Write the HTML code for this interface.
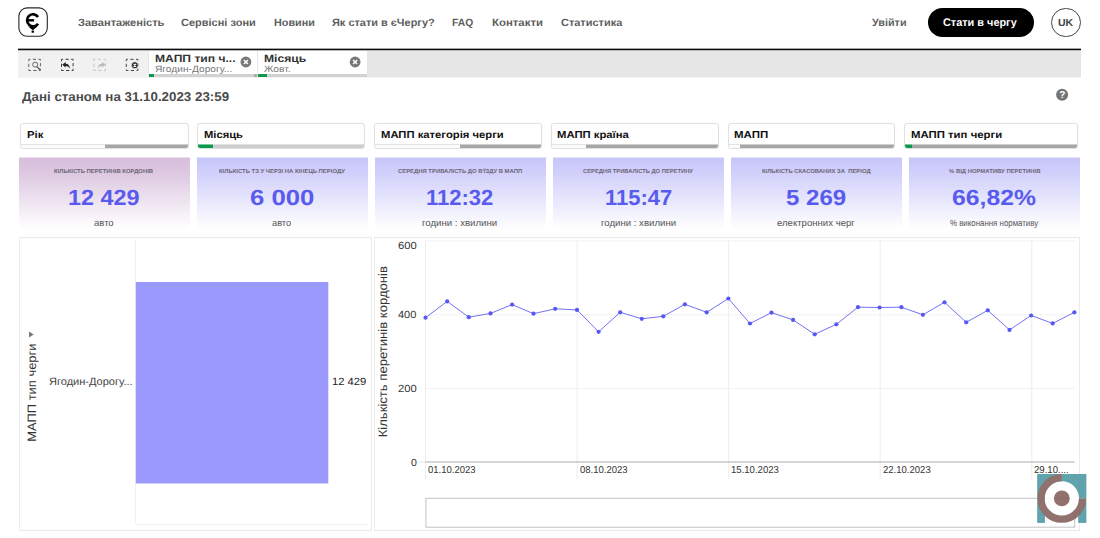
<!DOCTYPE html>
<html lang="uk">
<head>
<meta charset="utf-8">
<title>єЧерга — Статистика</title>
<style>
*{box-sizing:border-box;margin:0;padding:0}
html,body{width:1100px;height:538px;overflow:hidden;background:#fff}
body{font-family:"Liberation Sans",sans-serif;position:relative;color:#333;text-rendering:geometricPrecision}
.t{position:absolute;white-space:nowrap;line-height:1;transform-origin:0 0;display:block}
.btn{position:absolute;left:927.5px;top:7.5px;width:106px;height:29.5px;border-radius:15px;background:#000}
.lang{position:absolute;left:1051px;top:7.5px;width:29.7px;height:29.7px;border-radius:50%;border:1.1px solid #444}
.topline{position:absolute;z-index:2;left:18px;top:48px;width:1063px;height:3px;background:linear-gradient(#a6a6a6 0,#a6a6a6 1px,#0c0c0c 1px,#0c0c0c 2px,#b8b8b8 2px,#b8b8b8 3px)}
.toolbar{position:absolute;left:18px;top:50px;width:1063px;height:28px;background:linear-gradient(#e6e6e6 0,#e6e6e6 27px,#f3f3f3 27px)}
.tools{position:absolute;left:0;top:0;width:130px;height:27px;background:#f1f1f1}
.tab{position:absolute;top:0;height:27px;background:#fff}
.tab .bar{position:absolute;left:0;bottom:0;width:100%;height:3px;background:#d2d2d2}
.tab .bar i{position:absolute;top:0;height:3px}
.filter{position:absolute;top:123px;height:26px;background:#fff;border:1px solid #e1e1e1;border-radius:3px;overflow:hidden;box-shadow:0 0 1px rgba(0,0,0,.05)}
.filter .fb{position:absolute;left:0;right:0;bottom:0;height:4px;background:#fbfbfb;border-top:1px solid #e4e4e4}
.filter .fb i{position:absolute;top:-1px;height:4px}
.kpi{position:absolute;top:157px;width:171px;height:73px}
.kp{background:linear-gradient(#e4e3fc 0,#e4e3fc 1px,#c7c6fa 1px,#cfcefb 14px,#fff 72px)}
.kp1{background:linear-gradient(#ecdfee 0,#ecdfee 1px,#d8bedc 1px,#dcc6e0 14px,#fff 72px)}
.panel{position:absolute;top:237px;height:294px;border:1px solid #ebebeb;background:#fff}
svg{position:absolute;left:0;top:0;overflow:visible}
</style>
</head>
<body>
<!-- header -->
<svg width="30" height="30" viewBox="0 0 30 30" style="left:18px;top:7px">
  <rect x="0.9" y="0.9" width="28.4" height="28.4" rx="8.2" ry="8.2" fill="#fff" stroke="#262626" stroke-width="1.1"/>
  <path d="M20.05 9.95 A6 6 0 1 0 20.05 16.65" fill="none" stroke="#000" stroke-width="2.6"/>
  <path d="M9.3 13.3 H16.1" stroke="#000" stroke-width="2.4"/>
  <path d="M10.1 19.5 L19.5 19.5 L14.85 23.3 Z" fill="#000"/>
  <rect x="13.6" y="23.6" width="2.4" height="2.1" fill="#000"/>
</svg>
<div class="btn"></div>
<div class="lang"></div>
<div class="topline"></div>
<!-- toolbar -->
<div class="toolbar">
  <div class="tools"></div>
  <div class="tab" style="left:130.5px;width:108.5px"><div class="bar"><i style="left:0;width:5px;background:#0a9a4a"></i><i style="right:0;width:3px;background:#aaa"></i></div></div>
  <div class="tab" style="left:240px;width:109px"><div class="bar"><i style="left:0;width:9px;background:#0a9a4a"></i></div></div>
</div>
<svg width="1100" height="100" viewBox="0 0 1100 100">
  <!-- toolbar icons -->
  <g fill="none" stroke="#606060" stroke-width="1">
    <rect x="28.8" y="59.3" width="11.6" height="11.2" stroke-dasharray="3.2 2.45" stroke-dashoffset="1.6"/>
    <circle cx="35.2" cy="64.6" r="2.5" stroke-width="0.9" stroke="#555"/><path d="M37 66.6 L39.9 69.7" stroke-width="1.3" stroke="#555"/>
  </g>
  <g fill="none" stroke="#3a3a3a" stroke-width="1">
    <rect x="61.5" y="59.3" width="11.6" height="11.2" stroke-dasharray="3.2 2.45" stroke-dashoffset="1.6"/>
    <path d="M62.2 64.8 L65.7 62 L65.7 63.8 C68.1 63.8 69.7 65.5 69.9 68.7 C68.7 66.7 67.5 66 65.7 66 L65.7 67.6 Z" fill="#222" stroke="none"/>
  </g>
  <g fill="none" stroke="#c6c6c6" stroke-width="1">
    <rect x="93.8" y="59.3" width="11.6" height="11.2" stroke-dasharray="3.2 2.45" stroke-dashoffset="1.6"/>
    <path d="M105.4 64.8 L101.9 62 L101.9 63.8 C99.5 63.8 97.9 65.5 97.7 68.7 C98.9 66.7 100.1 66 101.9 66 L101.9 67.6 Z" fill="#bcbcbc" stroke="none"/>
  </g>
  <g fill="none" stroke="#484848" stroke-width="1">
    <rect x="126.3" y="59.3" width="11.6" height="11.2" stroke-dasharray="3.2 2.45" stroke-dashoffset="1.6"/>
    <circle cx="134.8" cy="65.2" r="3.5" fill="#2b2b2b" stroke="#f1f1f1" stroke-width="0.8"/><path d="M133.5 63.9 l2.6 2.6 M136.1 63.9 l-2.6 2.6" stroke="#fff" stroke-width="1.1"/>
  </g>
  <!-- tab close icons -->
  <g>
    <circle cx="245.9" cy="62" r="5.4" fill="#787878"/><path d="M243.9 60 l4 4 M247.9 60 l-4 4" stroke="#fff" stroke-width="1.5"/>
    <circle cx="355.1" cy="62" r="5.4" fill="#787878"/><path d="M353.1 60 l4 4 M357.1 60 l-4 4" stroke="#fff" stroke-width="1.5"/>
  </g>
  <!-- help -->
  <circle cx="1062.1" cy="94.8" r="6" fill="#747474"/>
</svg>
<span class="t" style="left:1059.2px;top:91px;font-size:10px;font-weight:bold;color:#fff">?</span>
<!-- filters -->
<div class="filter" style="left:20px;width:169px"><div class="fb"><i style="left:84px;right:0;background:linear-gradient(#cfcfcf 0,#cfcfcf 1px,#a6a6a6 1px)"></i></div></div>
<div class="filter" style="left:197px;width:167.5px"><div class="fb"><i style="left:0;width:14.5px;background:linear-gradient(#7cc79b 0,#7cc79b 1px,#0a9a4a 1px)"></i><i style="left:14.5px;right:0;background:linear-gradient(#e2e2e2 0,#e2e2e2 1px,#cdcdcd 1px)"></i></div></div>
<div class="filter" style="left:374px;width:168px"><div class="fb"><i style="left:84.5px;right:0;background:linear-gradient(#cfcfcf 0,#cfcfcf 1px,#a6a6a6 1px)"></i></div></div>
<div class="filter" style="left:551px;width:168px"><div class="fb"><i style="left:33.5px;right:0;background:linear-gradient(#cfcfcf 0,#cfcfcf 1px,#a6a6a6 1px)"></i></div></div>
<div class="filter" style="left:727.5px;width:167.5px"><div class="fb"><i style="left:11.5px;right:0;background:linear-gradient(#cfcfcf 0,#cfcfcf 1px,#a6a6a6 1px)"></i></div></div>
<div class="filter" style="left:904px;width:174px"><div class="fb"><i style="left:0;width:7px;background:linear-gradient(#7cc79b 0,#7cc79b 1px,#0a9a4a 1px)"></i><i style="left:7px;right:0;background:linear-gradient(#cfcfcf 0,#cfcfcf 1px,#a6a6a6 1px)"></i></div></div>
<!-- KPI -->
<div class="kpi kp1" style="left:19px"></div>
<div class="kpi kp" style="left:197.4px"></div>
<div class="kpi kp" style="left:375px"></div>
<div class="kpi kp" style="left:553.3px"></div>
<div class="kpi kp" style="left:731px"></div>
<div class="kpi kp" style="left:909px"></div>
<!-- panels -->
<div class="panel" style="left:19px;width:352.5px"></div>
<div class="panel" style="left:373.5px;width:706.5px"></div>
<svg width="1100" height="538" viewBox="0 0 1100 538">
  <!-- bar chart -->
  <path d="M135.5 240 V524" stroke="#f1f1f1" stroke-width="1"/>
  <path d="M136 524.5 H368" stroke="#f3f3f3" stroke-width="1.5"/>
  <rect x="135.8" y="282" width="192.5" height="201.5" fill="#9b99fc"/>
  <path d="M29 331.6 L33.7 334.5 L29 337.4 Z" fill="#7a7a7a"/>
  <!-- line chart grid -->
  <g stroke="#f2f2f2" stroke-width="1" fill="none">
    <path d="M425.5 240.8 H1075 M425.5 314.8 H1075 M425.5 388.5 H1075"/>
  </g>
  <g stroke="#ececec" stroke-width="1" fill="none">
    <path d="M425.5 240.8 V479.5 M577.2 240.8 V479.5 M728.7 240.8 V479.5 M880.2 240.8 V479.5 M1031.8 240.8 V479.5"/>
  </g>
  <path d="M419 462 H425.5" stroke="#e4e4e4" stroke-width="1"/>
  <path d="M425.5 462 H1074.8" stroke="#c9c9c9" stroke-width="1.4"/>
  <rect x="425.9" y="498.3" width="648.8" height="28.9" fill="#fff" stroke="#c2c2c2" stroke-width="1"/>
  <polyline fill="none" stroke="#7272f2" stroke-width="1" stroke-linejoin="round" points="425.5,317.7 447.2,301.4 468.8,317.2 490.5,313.4 512.1,304.6 533.5,313.7 555.2,308.8 577,309.9 598.6,331.8 620.2,312.3 641.8,318.8 663.3,316.3 684.9,304.3 706.7,312.3 728.4,298.5 750,323.5 771.5,312.6 793.1,319.9 814.7,334.3 836.4,324.3 858,307.2 879.6,307.5 901.4,307.2 922.9,314.8 944.5,302.3 966.2,322.3 987.8,310.3 1009.5,329.9 1031.1,315.5 1052.7,323.4 1074.4,312.3"/>
  <g fill="#5758f3"><circle cx="425.5" cy="317.7" r="2.1"/><circle cx="447.2" cy="301.4" r="2.1"/><circle cx="468.8" cy="317.2" r="2.1"/><circle cx="490.5" cy="313.4" r="2.1"/><circle cx="512.1" cy="304.6" r="2.1"/><circle cx="533.5" cy="313.7" r="2.1"/><circle cx="555.2" cy="308.8" r="2.1"/><circle cx="577" cy="309.9" r="2.1"/><circle cx="598.6" cy="331.8" r="2.1"/><circle cx="620.2" cy="312.3" r="2.1"/><circle cx="641.8" cy="318.8" r="2.1"/><circle cx="663.3" cy="316.3" r="2.1"/><circle cx="684.9" cy="304.3" r="2.1"/><circle cx="706.7" cy="312.3" r="2.1"/><circle cx="728.4" cy="298.5" r="2.1"/><circle cx="750" cy="323.5" r="2.1"/><circle cx="771.5" cy="312.6" r="2.1"/><circle cx="793.1" cy="319.9" r="2.1"/><circle cx="814.7" cy="334.3" r="2.1"/><circle cx="836.4" cy="324.3" r="2.1"/><circle cx="858" cy="307.2" r="2.1"/><circle cx="879.6" cy="307.5" r="2.1"/><circle cx="901.4" cy="307.2" r="2.1"/><circle cx="922.9" cy="314.8" r="2.1"/><circle cx="944.5" cy="302.3" r="2.1"/><circle cx="966.2" cy="322.3" r="2.1"/><circle cx="987.8" cy="310.3" r="2.1"/><circle cx="1009.5" cy="329.9" r="2.1"/><circle cx="1031.1" cy="315.5" r="2.1"/><circle cx="1052.7" cy="323.4" r="2.1"/><circle cx="1074.4" cy="312.3" r="2.1"/></g>
  <g font-family="Liberation Sans, sans-serif" style="text-rendering:geometricPrecision">
  <text transform="translate(36.40 440.80) rotate(-90) scale(1.0614 1)" x="-0.95" y="0" font-size="12.20" font-weight="normal" fill="#333">МАПП тип черги</text>
  <text transform="translate(387.30 436.30) rotate(-90) scale(1.0738 1)" x="-0.95" y="0" font-size="12.20" font-weight="normal" fill="#333">Кількість перетинів кордонів</text>
  </g>
  <!-- watermark logo -->
  <g transform="translate(1037.4 474)" opacity="0.9">
    <path d="M0 0 H48.8 V48.8 H41 V24.4 H7.3 V48.8 H0 Z" fill="#4f9aa4"/>
    <circle cx="24.4" cy="24.4" r="24.4" fill="#fff" />
    <path d="M24.4 0 H48.8 V24.4 H24.4 Z" fill="#4f9aa4"/>
    <path d="M0 0 H24.4 V24.4 H0 Z M0 24.4 H7.3 V48.8 H0 Z M41 24.4 H48.8 V48.8 H41 Z" fill="#4f9aa4"/>
    <circle cx="24.4" cy="24.4" r="17.2" fill="#fff"/>
    <path d="M45.15 24.4 A20.75 20.75 0 1 1 24.4 3.65" fill="none" stroke="#86625f" stroke-width="7.3"/>
    <circle cx="24.4" cy="24.4" r="7.9" fill="#86625f"/>
  </g>
</svg>
<span class="t" style="left:77.73px;top:19px;font-size:10.46px;font-weight:bold;color:#5e5e5e;transform:scaleX(1.0617)">Завантаженість</span>
<span class="t" style="left:181.41px;top:19px;font-size:10.46px;font-weight:bold;color:#5e5e5e;transform:scaleX(1.0526)">Сервісні зони</span>
<span class="t" style="left:273.57px;top:19px;font-size:10.46px;font-weight:bold;color:#5e5e5e;transform:scaleX(1.0346)">Новини</span>
<span class="t" style="left:332.33px;top:19px;font-size:10.46px;font-weight:bold;color:#5e5e5e;transform:scaleX(1.0471)">Як стати в єЧергу?</span>
<span class="t" style="left:452.36px;top:19px;font-size:10.46px;font-weight:bold;color:#5e5e5e;transform:scaleX(0.9853)">FAQ</span>
<span class="t" style="left:491.79px;top:19px;font-size:10.46px;font-weight:bold;color:#5e5e5e;transform:scaleX(1.0892)">Контакти</span>
<span class="t" style="left:560.66px;top:19px;font-size:10.46px;font-weight:bold;color:#5e5e5e;transform:scaleX(1.0482)">Статистика</span>
<span class="t" style="left:872.40px;top:19px;font-size:10.46px;font-weight:bold;color:#5e5e5e;transform:scaleX(1.0333)">Увійти</span>
<span class="t" style="left:943.16px;top:18px;font-size:11.04px;font-weight:bold;color:#fff;transform:scaleX(0.9882)">Стати в чергу</span>
<span class="t" style="left:1058.11px;top:19px;font-size:10.17px;font-weight:bold;color:#444;transform:scaleX(1.0372)">UK</span>
<span class="t" style="left:155.04px;top:54px;font-size:10.60px;font-weight:bold;color:#333;transform:scaleX(1.1428)">МАПП тип ч...</span>
<span class="t" style="left:154.72px;top:65px;font-size:9.15px;font-weight:normal;color:#777;transform:scaleX(1.1172)">Ягодин-Дорогу...</span>
<span class="t" style="left:263.84px;top:54px;font-size:10.60px;font-weight:bold;color:#333;transform:scaleX(1.1466)">Місяць</span>
<span class="t" style="left:264.30px;top:65px;font-size:9.15px;font-weight:normal;color:#777;transform:scaleX(1.1180)">Жовт.</span>
<span class="t" style="left:22.30px;top:91px;font-size:12.78px;font-weight:bold;color:#4a4a4a;transform:scaleX(1.0447)">Дані станом на 31.10.2023 23:59</span>
<span class="t" style="left:26.79px;top:131px;font-size:10.02px;font-weight:bold;color:#111;transform:scaleX(1.1278)">Рік</span>
<span class="t" style="left:203.80px;top:131px;font-size:10.02px;font-weight:bold;color:#111;transform:scaleX(1.1156)">Місяць</span>
<span class="t" style="left:381.40px;top:131px;font-size:10.02px;font-weight:bold;color:#111;transform:scaleX(1.1245)">МАПП категорія черги</span>
<span class="t" style="left:557.49px;top:131px;font-size:10.02px;font-weight:bold;color:#111;transform:scaleX(1.1275)">МАПП країна</span>
<span class="t" style="left:733.78px;top:131px;font-size:10.02px;font-weight:bold;color:#111;transform:scaleX(1.1466)">МАПП</span>
<span class="t" style="left:910.99px;top:131px;font-size:10.02px;font-weight:bold;color:#111;transform:scaleX(1.1354)">МАПП тип черги</span>
<span class="t" style="left:54.43px;top:170px;font-size:5.66px;font-weight:bold;color:#6b6673;transform:scaleX(1.0460)">КІЛЬКІСТЬ ПЕРЕТИНІВ КОРДОНІВ</span>
<span class="t" style="left:219.23px;top:170px;font-size:5.66px;font-weight:bold;color:#6b6673;transform:scaleX(1.0453)">КІЛЬКІСТЬ ТЗ У ЧЕРЗІ НА КІНЕЦЬ ПЕРІОДУ</span>
<span class="t" style="left:398.32px;top:170px;font-size:5.66px;font-weight:bold;color:#6b6673;transform:scaleX(1.0416)">СЕРЕДНЯ ТРИВАЛІСТЬ ДО В'ЇЗДУ В МАПП</span>
<span class="t" style="left:582.82px;top:170px;font-size:5.66px;font-weight:bold;color:#6b6673;transform:scaleX(1.0226)">СЕРЕДНЯ ТРИВАЛІСТЬ ДО ПЕРЕТИНУ</span>
<span class="t" style="left:761.63px;top:170px;font-size:5.66px;font-weight:bold;color:#6b6673;transform:scaleX(1.0376)">КІЛЬКІСТЬ СКАСОВАНИХ ЗА  ПЕРІОД</span>
<span class="t" style="left:948.61px;top:170px;font-size:5.66px;font-weight:bold;color:#6b6673;transform:scaleX(1.0432)">% ВІД НОРМАТИВУ ПЕРЕТИНІВ</span>
<span class="t" style="left:67.54px;top:187px;font-size:21.93px;font-weight:bold;color:#595bee;transform:scaleX(1.0665)">12 429</span>
<span class="t" style="left:250.40px;top:187px;font-size:21.93px;font-weight:bold;color:#595bee;transform:scaleX(1.1743)">6 000</span>
<span class="t" style="left:425.92px;top:187px;font-size:21.93px;font-weight:bold;color:#595bee;transform:scaleX(1.0036)">112:32</span>
<span class="t" style="left:604.83px;top:187px;font-size:21.93px;font-weight:bold;color:#595bee;transform:scaleX(1.0012)">115:47</span>
<span class="t" style="left:785.82px;top:187px;font-size:21.93px;font-weight:bold;color:#595bee;transform:scaleX(1.0964)">5 269</span>
<span class="t" style="left:951.93px;top:187px;font-size:21.93px;font-weight:bold;color:#595bee;transform:scaleX(1.1283)">66,82%</span>
<span class="t" style="left:94.10px;top:219px;font-size:9.46px;font-weight:normal;color:#555;transform:scaleX(1.0055)">авто</span>
<span class="t" style="left:272.11px;top:219px;font-size:9.46px;font-weight:normal;color:#555;transform:scaleX(0.9790)">авто</span>
<span class="t" style="left:422.40px;top:219px;font-size:9.46px;font-weight:normal;color:#555;transform:scaleX(1.0188)">години : хвилини</span>
<span class="t" style="left:600.60px;top:219px;font-size:9.46px;font-weight:normal;color:#555;transform:scaleX(1.0174)">години : хвилини</span>
<span class="t" style="left:776.80px;top:219px;font-size:9.46px;font-weight:normal;color:#555;transform:scaleX(1.0136)">електронних черг</span>
<span class="t" style="left:949.75px;top:219px;font-size:9.15px;font-weight:normal;color:#555;transform:scaleX(0.8626)">% виконання нормативу</span>
<span class="t" style="left:48.88px;top:377px;font-size:10.60px;font-weight:normal;color:#444;transform:scaleX(1.0414)">Ягодин-Дорогу...</span>
<span class="t" style="left:331.60px;top:378px;font-size:10.46px;font-weight:normal;color:#222;transform:scaleX(1.0677)">12 429</span>
<span class="t" style="left:397.97px;top:242px;font-size:10.46px;font-weight:normal;color:#333;transform:scaleX(1.0720)">600</span>
<span class="t" style="left:398.33px;top:311px;font-size:10.46px;font-weight:normal;color:#333;transform:scaleX(1.0515)">400</span>
<span class="t" style="left:397.97px;top:385px;font-size:10.46px;font-weight:normal;color:#333;transform:scaleX(1.0720)">200</span>
<span class="t" style="left:410.67px;top:459px;font-size:10.46px;font-weight:normal;color:#333;transform:scaleX(1.0136)">0</span>
<span class="t" style="left:428.30px;top:466px;font-size:10.02px;font-weight:normal;color:#333;transform:scaleX(0.9487)">01.10.2023</span>
<span class="t" style="left:579.70px;top:466px;font-size:10.02px;font-weight:normal;color:#333;transform:scaleX(0.9487)">08.10.2023</span>
<span class="t" style="left:730.90px;top:466px;font-size:10.02px;font-weight:normal;color:#333;transform:scaleX(0.9547)">15.10.2023</span>
<span class="t" style="left:882.55px;top:466px;font-size:10.02px;font-weight:normal;color:#333;transform:scaleX(0.9517)">22.10.2023</span>
<span class="t" style="left:1034.15px;top:466px;font-size:10.02px;font-weight:normal;color:#333;transform:scaleX(0.9586)">29.10....</span>
</body>
</html>
